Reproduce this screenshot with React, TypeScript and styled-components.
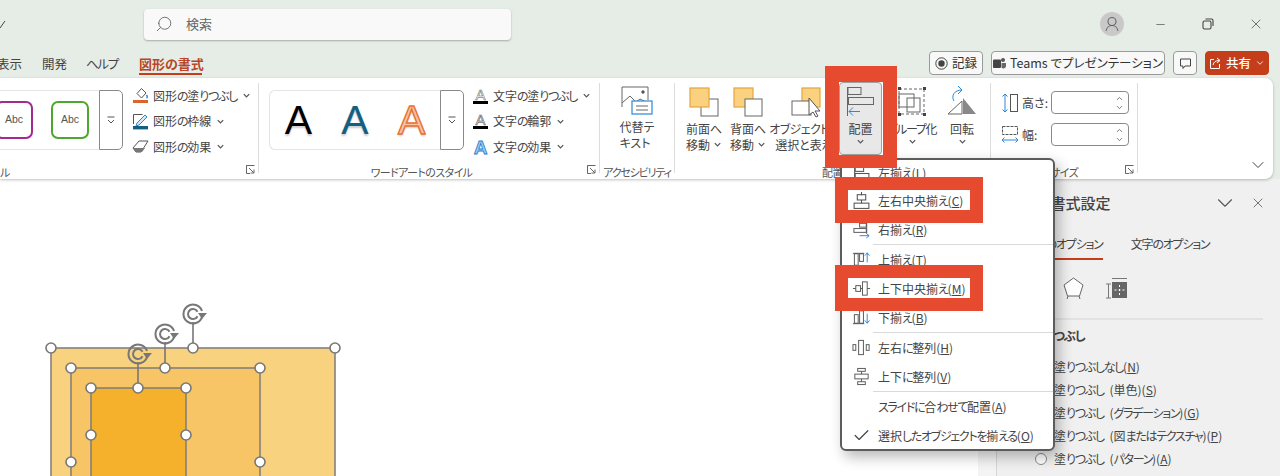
import React from "react";
import styled, { createGlobalStyle } from "styled-components";
import { Check, ChevronDown, ChevronUp, Minus, Search, X } from "lucide-react";

const GlobalStyle = createGlobalStyle`
  html, body { margin: 0; padding: 0; background: #fff; }
  * { box-sizing: border-box; }
  body { font-family: "Noto Sans CJK JP", "Noto Sans", sans-serif; font-feature-settings: "palt"; color: #444; }
`;

const KanaRun = styled.span`
  letter-spacing: -1.3px;
`;
const K = ({ t }: { t: string }) => (
  <>
    {t.split(/([\u3040-\u30ff]+)/).map((part, i) => (i % 2 ? <KanaRun key={i}>{part}</KanaRun> : part))}
  </>
);

const Page = styled.div`
  position: relative; width: 1280px; height: 476px; overflow: hidden; display: flex; flex-direction: column;
  background: #e6ece6; font-size: 12px; line-height: 16px;
`;
const TitleBar = styled.div`
  height: 50px; flex: none; display: flex; align-items: center; padding: 0 0 2px 0;
`;
const BackChevron = styled.svg`
  width: 6px; height: 10px; margin-right: 138px; flex: none;
`;
const SearchBox = styled.div`
  width: 367px; height: 31px; display: flex; align-items: center; gap: 13px; padding-left: 11px; color: #666; font-size: 13px;
  background: #f8f9f8; border-radius: 4px; box-shadow: 0 1px 2px rgba(0,0,0,.28);
  svg { transform: scaleX(-1); color: #666; }
`;
const WindowControls = styled.div`
  margin-left: auto; display: flex; align-items: center; color: #444;
`;
const Avatar = styled.div`
  width: 24px; height: 24px; border-radius: 50%; background: #c9c9c9; display: grid; place-items: center; margin-right: 12px;
`;
const WinButton = styled.div`
  width: 48px; display: flex; justify-content: center;
`;
const TabRow = styled.div`
  height: 28px; flex: none; display: flex; align-items: flex-start; padding: 1px 11px 0 0; position: relative;
`;
const Tab = styled.div<{ $active?: boolean; $w: number }>`
  width: ${(p) => p.$w}px; height: 24px; display: flex; align-items: center; font-size: ${(p) => (p.$active ? 13 : 12.5)}px;
  font-weight: ${(p) => (p.$active ? 700 : 400)}; color: ${(p) => (p.$active ? "#b7472a" : "#444")}; flex: none;
  box-shadow: ${(p) => (p.$active ? "inset 0 -2px 0 #c43e1c" : "none")};
  margin: 0 ${(p) => (p.$active ? 0 : 20)}px 0 0; white-space: nowrap; padding-top: 2px;
`;
const TabSpacer = styled.div`
  width: 0; margin-left: -3px;
`;
const Actions = styled.div`
  margin-left: auto; display: flex; gap: 8px; padding-top: 0;
`;
const ActionButton = styled.div<{ $w: number; $primary?: boolean }>`
  width: ${(p) => p.$w}px; height: 24px; border-radius: 4px; display: flex; align-items: center; justify-content: center; gap: 4px;
  border: 1px solid ${(p) => (p.$primary ? "#c43e1c" : "#9a9a9a")};
  background: ${(p) => (p.$primary ? "#c43e1c" : "#f7f8f7")};
  color: ${(p) => (p.$primary ? "#fff" : "#333")}; font-size: 12.5px; white-space: nowrap; font-weight: ${(p) => (p.$primary ? 500 : 400)};
`;
const Ribbon = styled.div`
  height: 101px; flex: none; width: 1273px; background: #fff; border-radius: 0 8px 8px 0; display: flex; padding: 5px 0 6px;
  box-shadow: 0 1px 3px rgba(0,0,0,.25); position: relative; z-index: 1;
`;
const Group = styled.div<{ $w: number; $last?: boolean }>`
  width: ${(p) => p.$w}px; flex: none; display: flex; flex-direction: column; position: relative;
  border-right: ${(p) => (p.$last ? "0" : "1px solid #dcdcdc")};
`;
const GroupBody = styled.div<{ $pl?: number; $gap?: number }>`
  height: 70px; flex: none; display: flex; padding-left: ${(p) => p.$pl ?? 0}px; gap: ${(p) => p.$gap ?? 0}px;
`;
const GroupLabel = styled.div<{ $left?: boolean; $ls?: number; $pr?: number }>`
  flex: 1; display: flex; align-items: center; justify-content: ${(p) => (p.$left ? "flex-start" : "center")}; font-size: 11px; color: #555; white-space: nowrap;
  padding: 11px ${(p) => p.$pr ?? 0}px 0 0; letter-spacing: ${(p) => p.$ls ?? -0.6}px;
`;
const Launcher = styled.svg`
  position: absolute; right: 3px; bottom: -1px; width: 9px; height: 9px;
`;
const Gallery = styled.div<{ $w: number; $end?: boolean; $open?: boolean }>`
  width: ${(p) => p.$w}px; height: 60px; margin-top: 7px; display: flex; align-items: center; overflow: hidden; flex: none;
  justify-content: ${(p) => (p.$end ? "flex-end" : "flex-start")}; padding-right: ${(p) => (p.$end ? 10 : 0)}px; gap: ${(p) => (p.$end ? 18 : 0)}px;
  border: 1px solid #e4e4e4; border-left-width: ${(p) => (p.$open ? 0 : 1)}px; border-right: 0;
  border-radius: ${(p) => (p.$open ? "0" : "6px 0 0 6px")};
`;
const GalleryMore = styled.div`
  width: 24px; height: 60px; margin-top: 7px; flex: none; border: 1px solid #8a8a8a; border-radius: 0 5px 5px 0; display: grid; place-items: center;
`;
const AbcTile = styled.div<{ $c: string }>`
  width: 38px; height: 38px; flex: none; border: 2px solid ${(p) => p.$c}; border-radius: 7px; display: grid; place-items: center;
  font-family: "Liberation Sans", sans-serif; font-size: 10.5px; color: #555; padding-bottom: 3px;
`;
const ArtA = styled.div<{ $c: string; $stroke?: string; $sw?: number }>`
  width: 57px; text-align: center; font-family: "Liberation Sans", sans-serif; font-size: 41px; line-height: 46px; color: ${(p) => p.$c};
  -webkit-text-stroke: ${(p) => p.$sw ?? 0}px ${(p) => p.$stroke ?? p.$c}; text-shadow: 0 2px 2px rgba(0,0,0,.2);
`;
const CommandColumn = styled.div<{ $ml: number }>`
  margin-left: ${(p) => p.$ml}px; display: flex; flex-direction: column; flex: none; padding-top: 0;
`;
const Command = styled.div`
  height: 25.5px; flex: none; display: flex; align-items: center; gap: 4px; white-space: nowrap; font-size: 12px;
  svg.chev { margin-left: 1px; }
`;
const LargeButton = styled.div<{ $w: number; $active?: boolean }>`
  width: ${(p) => p.$w}px; height: 73px; margin-top: -1px; flex: none; display: flex; flex-direction: column; align-items: center; white-space: nowrap;
  padding-top: 3px; line-height: 15.5px; font-size: 12px;
  background: ${(p) => (p.$active ? "#e8e8e8" : "transparent")};
  border: ${(p) => (p.$active ? "1px solid #a0a0a0" : "1px solid transparent")}; border-radius: 4px;
  > svg:first-child { flex: none; margin-bottom: 3px; }
`;
const TightLabel = styled.span`
  letter-spacing: -0.6px;
`;
const Inline = styled.span`
  display: inline-flex; align-items: center; gap: 3px;
`;
const SizeStack = styled.div`
  padding-top: 3.5px;
`;
const SizeRow = styled.div`
  height: 32px; display: flex; align-items: center; font-size: 12px;
`;
const SizeLabel = styled.div`
  width: 32px; padding-left: 3px; flex: none;
`;
const Spin = styled.div`
  width: 78px; height: 23px; border: 1px solid #8a8a8a; border-radius: 4px; display: flex; flex-direction: column; align-items: flex-end; justify-content: center; padding-right: 4px;
  color: #555;
`;
const Collapse = styled.div`
  position: absolute; right: 5px; bottom: 4px; color: #444; display: flex;
`;
const Work = styled.div`
  flex: 1; display: flex; background: #fff; min-height: 0;
`;
const Canvas = styled.div`
  width: 978px; flex: none; position: relative;
`;
const Strip = styled.div`
  width: 18px; flex: none; background: #f4f4f4;
`;
const Panel = styled.div`
  flex: 1; background: #f0f0f0; border-left: 1px solid #d6d6d6; padding-left: 9px;
`;
const PanelHead = styled.div`
  height: 47px; display: flex; align-items: center; font-size: 15px; font-weight: 500; padding-top: 1px; color: #444;
`;
const PanelIcons = styled.div`
  margin-left: auto; display: flex; align-items: center; gap: 12px; padding-right: 14px; color: #555;
`;
const PanelTabs = styled.div`
  height: 34px; display: flex; gap: 28px; align-items: stretch; padding-left: 18px;
`;
const PanelTab = styled.div<{ $active?: boolean }>`
  padding-top: 10px; font-size: 12px; white-space: nowrap; letter-spacing: -1.2px;
  box-shadow: ${(p) => (p.$active ? "inset 0 -2px 0 #c43e1c" : "none")};
`;
const PanelGlyphs = styled.div`
  height: 60px; display: flex; align-items: center; gap: 21px; padding: 0 0 3px 57px; border-bottom: 2px solid #e2e2e2; margin-right: 17px;
`;
const Section = styled.div`
  height: 31px; display: flex; align-items: center; font-size: 12.5px; font-weight: 700; padding: 0 0 0 26px; color: #444; white-space: nowrap;
`;
const Radios = styled.div`
  padding: 4px 0 0 29px;
`;
const RadioRow = styled.div`
  height: 23px; display: flex; align-items: center; gap: 7px; white-space: pre; font-size: 12px; word-spacing: 3px;
`;
const RadioDot = styled.span`
  width: 12px; height: 12px; border-radius: 50%; border: 1px solid #8a8a8a; background: #fff; flex: none;
`;
const Menu = styled.div`
  position: absolute; left: 840px; top: 158px; width: 215px; height: 293px; background: #fff; border: 2px solid #5c5c5c; border-radius: 6px;
  box-shadow: 4px 6px 14px rgba(0,0,0,.28); z-index: 3; display: flex; flex-direction: column;
`;
const MenuRow = styled.div<{ $first?: boolean }>`
  height: ${(p) => (p.$first ? 26 : 29)}px; flex: none; display: flex; align-items: center; white-space: nowrap; color: #444;
`;
const MenuIcon = styled.span`
  width: 36px; flex: none; display: flex; justify-content: center; padding-left: 2px;
  svg { width: 19px; height: 19px; }
`;
const MenuSep = styled.div`
  height: 1px; flex: none; margin-left: 31px; background: #d9d9d9;
`;
const Highlight = styled.div<{ $l: number; $t: number; $w: number; $h: number; $bt: number; $bb: number; $bx: number }>`
  position: absolute; left: ${(p) => p.$l}px; top: ${(p) => p.$t}px; width: ${(p) => p.$w}px; height: ${(p) => p.$h}px; z-index: 4;
  border: solid #e64a2f; border-width: ${(p) => p.$bt}px ${(p) => p.$bx}px ${(p) => p.$bb}px;
`;
const Chevron = ({ size = 9 }: { size?: number }) => (
  <svg className="chev" width={size} height={size} viewBox="0 0 10 10" fill="none" stroke="#555" strokeWidth="1.4"><path d="M2 3.5 5 6.5 8 3.5" /></svg>
);
const LauncherIcon = () => (
  <Launcher viewBox="0 0 9 9" fill="none" stroke="#666"><path d="M.5 4V.5H8.5M.5 .5V8.5H4" /><path d="M3 3 8 8M8 4.5V8H4.5" /></Launcher>
);
const MoreIcon = () => (
  <svg width="10" height="10" viewBox="0 0 10 10" fill="none" stroke="#555"><path d="M1.5 2h7" /><path d="M2 5l3 3 3-3" /></svg>
);
const FillIcon = () => (
  <svg width="17" height="17" viewBox="0 0 17 17" fill="none"><path d="M9.5 1.5 14 6l-4.5 5L5 6.5Z" stroke="#555" /><path d="M14.5 8c1 1.5 1 2.5 0 3" stroke="#2b88d8" strokeWidth="1.5" /><rect x="1" y="13" width="15" height="3" fill="#d9672b" /></svg>
);
const LineIcon = () => (
  <svg width="17" height="17" viewBox="0 0 17 17" fill="none"><path d="M1.5 11V1.5h9" stroke="#555" /><path d="M5 10l8-8 2 2-8 8-3 1Z" stroke="#2b88d8" fill="#d7ecfa" /><rect x="1" y="13" width="15" height="3.4" fill="#155f82" /></svg>
);
const EffectIcon = () => (
  <svg width="17" height="17" viewBox="0 0 17 17"><path d="M1 10 7 3h9l-5 8-2 3H4Z" fill="#fff" stroke="#555" /><path d="M1 10h9l3 0-3 4H4Z" fill="#777" /></svg>
);
const TextA = ({ c, fill }: { c: string; fill?: boolean }) => (
  <svg width="17" height="18" viewBox="0 0 17 18"><text x="8.5" y="12.5" textAnchor="middle" fontFamily="Liberation Sans" fontSize="15" fill={fill ? "#ccc" : "#fff"} stroke="#555" strokeWidth=".5">A</text><rect x="1" y="14" width="15" height="3" fill={c} /></svg>
);
const TextFx = () => (
  <svg width="17" height="18" viewBox="0 0 17 18"><text x="8.5" y="15.5" textAnchor="middle" fontFamily="Liberation Sans" fontWeight="700" fontSize="19" fill="#9ccdf0" stroke="#2b7cd3" strokeWidth=".8">A</text></svg>
);
const AltIcon = () => (
  <svg width="32" height="30" viewBox="0 0 32 30" fill="none"><path d="M1 21V1h26v13" stroke="#666" /><path d="M1 17l8-7 6 6 4-3 6 3" stroke="#666" /><circle cx="22" cy="6" r="1.7" fill="#555" /><rect x="11" y="15" width="20" height="13" fill="#fff" stroke="#2b88d8" strokeWidth="1.2" /><path d="M15 20h12M15 24h12" stroke="#666" /></svg>
);
const StackIcon = ({ kind }: { kind: "front" | "back" | "pick" }) => {
  const o = { fill: "#fad27f", stroke: "#e8a33d", strokeWidth: 1.2 };
  const w = { fill: "#fff", stroke: "#666", strokeWidth: 1 };
  return (
    <svg width="34" height="32" viewBox="0 0 34 32">
      {kind === "front" && (<><rect x="14" y="13" width="17" height="17" {...w} /><rect x="3" y="2" width="19" height="19" {...o} /></>)}
      {kind === "back" && (<><rect x="3" y="2" width="19" height="19" {...o} /><rect x="14" y="13" width="17" height="17" {...w} /></>)}
      {kind === "pick" && (<><rect x="14" y="2" width="18" height="19" {...o} /><rect x="4" y="15" width="19" height="14" {...w} /><path d="M21 12v17l4-3 3 5 2-1-3-5h5Z" fill="#fff" stroke="#555" /></>)}
    </svg>
  );
};
const AlignIcon = () => (
  <svg width="32" height="32" viewBox="0 0 32 32" fill="none" stroke="#666"><path d="M2.5 1v29" /><rect x="3" y="1.500" width="13" height="7" /><rect x="3.500" y="11.500" width="25" height="7" /><path d="M4 25.500h11M8 21.500l-4 4 4 4" stroke="#2b88d8" /></svg>
);
const GroupIcon = () => (
  <svg width="30" height="32" viewBox="0 0 30 32" fill="none" stroke="#666"><rect x="2" y="3" width="25" height="25" strokeDasharray="3 2" /><rect x="2" y="8" width="15" height="13" /><rect x="10" y="12" width="13" height="14" />{[[2, 2], [27, 2], [2, 28], [27, 28]].map(([x, y]) => <rect key={`${x}${y}`} x={x - 1} y={y - 1} width="3" height="3" fill="#444" stroke="none" />)}</svg>
);
const RotateIcon = () => (
  <svg width="32" height="32" viewBox="0 0 32 32" fill="none"><path d="M2 28 16 15v13Z" stroke="#666" /><path d="M17 12l13 16H17Z" fill="#888" /><path d="M16 4C8 4 5 10 8 15" stroke="#2b88d8" /><path d="M12 0l4 4-4 4" stroke="#2b88d8" /></svg>
);
const HeightIcon = () => (
  <svg width="18" height="24" viewBox="0 0 18 24" fill="none"><path d="M4 3v18M1.5 5.5 4 3l2.500 2.500M1.500 18.500 4 21l2.500-2.500" stroke="#2b88d8" /><rect x="9.500" y="3.500" width="7" height="17" stroke="#555" /></svg>
);
const WidthIcon = () => (
  <svg width="18" height="24" viewBox="0 0 18 24" fill="none"><rect x="1.500" y="3.500" width="15" height="8" stroke="#555" strokeDasharray="3 1" /><path d="M1 17h16M3.500 14.500 1 17l2.500 2.500M14.500 14.500 17 17l-2.500 2.500" stroke="#2b88d8" /></svg>
);
const Rotation = ({ x, y }: { x: number; y: number }) => (
  <g transform={`translate(${x} ${y})`} fill="none" stroke="#777">
    <path d="M9 3A9.500 9.500 0 1 1 9-3" strokeWidth="2" />
    <path d="M4.500 2.200A5 5 0 1 1 4.500-2.200" strokeWidth="2" />
    <path d="M5-1 14-1 9 5Z" fill="#777" stroke="none" />
  </g>
);
const Handle = ({ x, y }: { x: number; y: number }) => <circle cx={x} cy={y} r="5" fill="#fff" stroke="#777" strokeWidth="1.600" />;
const Diagram = () => (
  <svg width="978" height="297" viewBox="0 0 978 297" style={{ display: "block" }}>
    <g transform="translate(0 -179)">
      <rect x="51" y="348" width="284" height="140" fill="#f9d27f" stroke="#85817a" strokeWidth="1.600" />
      <rect x="71" y="368" width="189" height="120" fill="#f7c565" stroke="#85817a" strokeWidth="1.600" />
      <rect x="91" y="388" width="95" height="100" fill="#f5b12c" stroke="#85817a" strokeWidth="1.600" />
      <path d="M193 348V322M165 368V342M138 388V362" stroke="#777" strokeWidth="1.600" />
      <Rotation x={193} y={314} />
      <Rotation x={165} y={334} />
      <Rotation x={138} y={354} />
      {[[51, 348], [193, 348], [335, 348], [71, 368], [165, 368], [260, 368], [91, 388], [138, 388], [186, 388], [91, 435], [186, 435], [71, 462], [260, 462]].map(([x, y]) => <Handle key={`${x}-${y}`} x={x} y={y} />)}
    </g>
  </svg>
);
const mi = { fill: "none", stroke: "#555" };
const MI = {
  left: <svg viewBox="0 0 18 18" {...mi}><path d="M2.500 1v16" /><rect x="3" y="3" width="8" height="4" /><rect x="3" y="9" width="13" height="4" /></svg>,
  center: <svg viewBox="0 0 18 18" {...mi}><path d="M9 1v3M9 8.500v3" /><rect x="5" y="3.500" width="8" height="5" /><rect x="2" y="11.500" width="14" height="5" /></svg>,
  right: <svg viewBox="0 0 20 18" {...mi}><path d="M15.500 1v12" /><rect x="8" y="2.500" width="7" height="4" /><rect x="2" y="8" width="13" height="4" /><path d="M8 15.500h10M15 13l3 2.500-3 2.500" stroke="#2b88d8" /></svg>,
  top: <svg viewBox="0 0 20 18" {...mi}><path d="M1 2.500h12" /><rect x="2.500" y="3" width="4" height="12" /><rect x="8" y="3" width="4" height="8" /><path d="M16 12V2M13.500 5 16 2l2.500 3" stroke="#2b88d8" /></svg>,
  middle: <svg viewBox="0 0 20 18" {...mi}><path d="M1 9h3M9 9h2M16 9h3" /><rect x="4" y="6" width="5" height="6" /><rect x="11" y="2" width="5" height="14" /></svg>,
  bottom: <svg viewBox="0 0 20 18" {...mi}><path d="M1 15.500h12" /><rect x="2.500" y="6" width="4" height="9" /><rect x="8" y="2" width="4" height="13" /><path d="M16 5v10M13.500 12l2.500 3 2.500-3" stroke="#2b88d8" /></svg>,
  hdist: <svg viewBox="0 0 20 18" {...mi}><rect x="1" y="6" width="3" height="6" /><rect x="7" y="1.500" width="5" height="15" /><rect x="15" y="6" width="3" height="6" /></svg>,
  vdist: <svg viewBox="0 0 18 20" {...mi}><rect x="5" y="1.500" width="8" height="3" /><rect x="2" y="7.500" width="14" height="5" /><rect x="5" y="15.500" width="8" height="3" /><path d="M9 4.500v3M9 12.500v3" /></svg>,
};
const menu: { icon?: React.ReactNode; text: string; key?: string; sep?: boolean }[] = [
  { icon: MI.left, text: "左揃え", key: "L" },
  { icon: MI.center, text: "左右中央揃え", key: "C" },
  { icon: MI.right, text: "右揃え", key: "R", sep: true },
  { icon: MI.top, text: "上揃え", key: "T" },
  { icon: MI.middle, text: "上下中央揃え", key: "M" },
  { icon: MI.bottom, text: "下揃え", key: "B", sep: true },
  { icon: MI.hdist, text: "左右に整列", key: "H" },
  { icon: MI.vdist, text: "上下に整列", key: "V", sep: true },
  { text: "スライドに合わせて配置", key: "A" },
  { icon: <Check size={15} color="#444" strokeWidth={1.5} />, text: "選択したオブジェクトを揃える", key: "O" },
];
const radios: [string, string][] = [["塗りつぶしなし", "N"], ["塗りつぶし (単色)", "S"], ["塗りつぶし (グラデーション)", "G"], ["塗りつぶし (図またはテクスチャ)", "P"], ["塗りつぶし (パターン)", "A"], ["スライドの背景", "B"]];

export default function App() {
  return (
    <Page>
      <GlobalStyle />
      <TitleBar>
        <BackChevron viewBox="0 0 6 10" fill="none" stroke="#444"><path d="M0 9 5 2" /></BackChevron>
        <SearchBox><Search size={18} strokeWidth={1.2} /><span>検索</span></SearchBox>
        <WindowControls>
          <Avatar><svg width="16" height="16" viewBox="0 0 16 16" fill="none" stroke="#666" strokeWidth="1.100"><circle cx="8" cy="5.500" r="4" /><path d="M2 15c.5-3 3-5.500 6-5.500s5.500 2.500 6 5.500" /></svg></Avatar>
          <WinButton><Minus size={13} strokeWidth={1.2} /></WinButton>
          <WinButton><svg width="12" height="12" viewBox="0 0 12 12" fill="none" stroke="#444" strokeWidth="1.100"><rect x="1" y="3" width="8" height="8" rx="1.500" /><path d="M3.500 1H9.500a1.500 1.500 0 0 1 1.500 1.500V8" /></svg></WinButton>
          <WinButton><X size={16} strokeWidth={1.1} /></WinButton>
        </WindowControls>
      </TitleBar>
      <TabRow>
        <TabSpacer />
        <Tab $w={25}>表示</Tab>
        <Tab $w={24}>開発</Tab>
        <Tab $w={33}><K t="ヘルプ" /></Tab>
        <Tab $w={63} $active>図形の書式</Tab>
        <Actions>
          <ActionButton $w={54}><svg width="13" height="13" viewBox="0 0 13 13"><circle cx="6.500" cy="6.500" r="5.700" fill="none" stroke="#444" /><circle cx="6.500" cy="6.500" r="3.200" fill="#444" /></svg>記録</ActionButton>
          <ActionButton $w={174}><svg width="13" height="13" viewBox="0 0 13 13"><rect x="0" y="2.500" width="8" height="8.500" rx="1" fill="#444" /><circle cx="10" cy="3" r="2" fill="#555" /><path d="M8.500 6H13v3a2.500 2.500 0 0 1-4.500 1.500Z" fill="#666" /></svg>Teams でプレゼンテーション</ActionButton>
          <ActionButton $w={24}><svg width="13" height="13" viewBox="0 0 13 13" fill="none" stroke="#444"><path d="M1.500 2h10v7H6L4 11.500V9H1.500Z" /></svg></ActionButton>
          <ActionButton $w={64} $primary><svg width="13" height="13" viewBox="0 0 13 13" fill="none" stroke="#fff"><path d="M5 2.500H1.500V11.500H10.500V7" /><path d="M4 8c.5-3 3-4.500 6-4.500M8 1l3 2.500L8 6" /></svg>共有<ChevronDown size={10} strokeWidth={2} /></ActionButton>
        </Actions>
      </TabRow>
      <Ribbon>
        <Group $w={259}>
          <GroupBody>
            <Gallery $w={99} $end $open>
              <AbcTile $c="#a02b93">Abc</AbcTile>
              <AbcTile $c="#4ea72e">Abc</AbcTile>
            </Gallery>
            <GalleryMore><MoreIcon /></GalleryMore>
            <CommandColumn $ml={9}>
              <Command><FillIcon /><span><K t="図形の塗りつぶし" /></span><Chevron /></Command>
              <Command><LineIcon /><span><K t="図形の枠線" /></span><Chevron /></Command>
              <Command><EffectIcon /><span><K t="図形の効果" /></span><Chevron /></Command>
            </CommandColumn>
          </GroupBody>
          <GroupLabel $left>ル</GroupLabel>
          <LauncherIcon />
        </Group>
        <Group $w={341}>
          <GroupBody $pl={10}>
            <Gallery $w={171}>
              <ArtA $c="#000">A</ArtA>
              <ArtA $c="#156082">A</ArtA>
              <ArtA $c="#f7c3a6" $stroke="#e97132" $sw={1.4}>A</ArtA>
            </Gallery>
            <GalleryMore><MoreIcon /></GalleryMore>
            <CommandColumn $ml={8}>
              <Command><TextA c="#000" /><span><K t="文字の塗りつぶし" /></span><Chevron /></Command>
              <Command><TextA c="#000" fill /><span><K t="文字の輪郭" /></span><Chevron /></Command>
              <Command><TextFx /><span><K t="文字の効果" /></span><Chevron /></Command>
            </CommandColumn>
          </GroupBody>
          <GroupLabel $pr={15}>ワードアートのスタイル</GroupLabel>
          <LauncherIcon />
        </Group>
        <Group $w={75}>
          <GroupBody>
            <LargeButton $w={74}><AltIcon />代替テ<br />キスト</LargeButton>
          </GroupBody>
          <GroupLabel $ls={-1.2}>アクセシビリティ</GroupLabel>
        </Group>
        <Group $w={316}>
          <GroupBody $pl={7}>
            <LargeButton $w={44}><StackIcon kind="front" />前面へ<Inline>移動<Chevron /></Inline></LargeButton>
            <LargeButton $w={44}><StackIcon kind="back" />背面へ<Inline>移動<Chevron /></Inline></LargeButton>
            <LargeButton $w={69}><StackIcon kind="pick" /><TightLabel>オブジェクトの</TightLabel><span>選択と表示</span></LargeButton>
            <LargeButton $w={43} $active><AlignIcon />配置<Chevron /></LargeButton>
            <LargeButton $w={60}><GroupIcon /><span><K t="グループ化" /></span><Chevron /></LargeButton>
            <LargeButton $w={40}><RotateIcon />回転<Chevron /></LargeButton>
          </GroupBody>
          <GroupLabel>配置</GroupLabel>
        </Group>
        <Group $w={147}>
          <GroupBody $pl={10}>
            <SizeStack>
              <SizeRow><HeightIcon /><SizeLabel>高さ:</SizeLabel><Spin><ChevronUp size={9} /><ChevronDown size={9} /></Spin></SizeRow>
              <SizeRow><WidthIcon /><SizeLabel>幅:</SizeLabel><Spin><ChevronUp size={9} /><ChevronDown size={9} /></Spin></SizeRow>
            </SizeStack>
          </GroupBody>
          <GroupLabel>サイズ</GroupLabel>
          <LauncherIcon />
        </Group>
        <Collapse><ChevronDown size={20} strokeWidth={1.200} /></Collapse>
      </Ribbon>
      <Work>
        <Canvas><Diagram /></Canvas>
        <Strip />
        <Panel>
          <PanelHead>図形の書式設定<PanelIcons><ChevronDown size={26} strokeWidth={1} /><X size={16} strokeWidth={1.200} /></PanelIcons></PanelHead>
          <PanelTabs><PanelTab $active>図形のオプション</PanelTab><PanelTab>文字のオプション</PanelTab></PanelTabs>
          <PanelGlyphs>
            <svg width="21" height="24" viewBox="0 0 21 24" fill="#fff" stroke="#666"><path d="M10.500 2 20 9l-3.500 11h-12L1 9Z" /><path d="M4 23l1-3M17 23l-1-3" fill="none" /></svg>
            <svg width="22" height="22" viewBox="0 0 22 22"><path d="M7 1.500h15M1 7h5M1 21h5M3.500 7v14" stroke="#777" fill="none" /><rect x="7" y="5" width="15" height="16" fill="#666" /><path d="M14.500 8v10M9.500 13h10" stroke="#fff" strokeDasharray="2 2" /></svg>
          </PanelGlyphs>
          <Section><K t="塗りつぶし" /></Section>
          <Radios>
            {radios.map(([t, k]) => (
              <RadioRow key={k}><RadioDot /><span><K t={t} />(<u>{k}</u>)</span></RadioRow>
            ))}
          </Radios>
        </Panel>
      </Work>
      <Menu>
        {menu.map((m, i) => (
          <React.Fragment key={m.text}>
            <MenuRow $first={i === 0}>
              <MenuIcon>{m.icon}</MenuIcon>
              <span><K t={m.text} />(<u>{m.key}</u>)</span>
            </MenuRow>
            {m.sep && <MenuSep />}
          </React.Fragment>
        ))}
      </Menu>
      <Highlight $l={825} $t={66} $w={72} $h={102} $bt={16} $bb={13} $bx={14} />
      <Highlight $l={835} $t={177} $w={148} $h={46} $bt={13} $bb={13} $bx={13} />
      <Highlight $l={835} $t={265} $w={148} $h={46} $bt={13} $bb={13} $bx={13} />
    </Page>
  );
}
